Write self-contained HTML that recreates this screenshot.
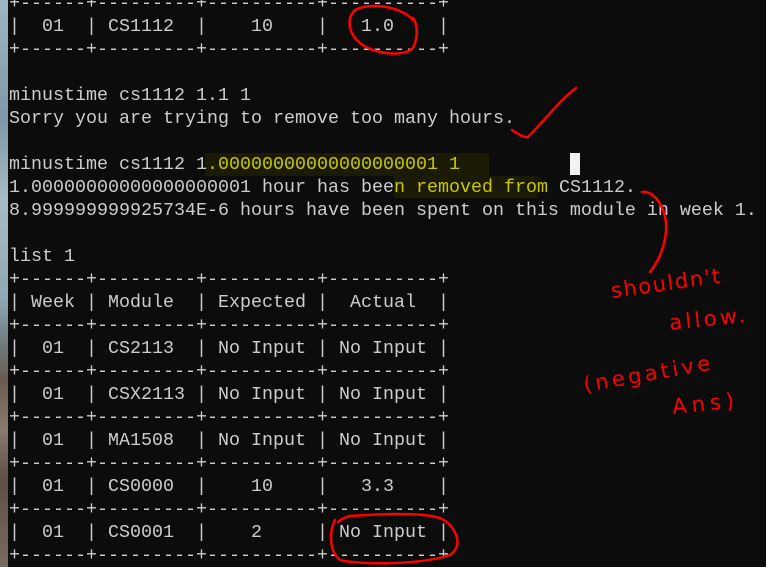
<!DOCTYPE html>
<html><head><meta charset="utf-8"><style>
html,body{margin:0;padding:0;width:766px;height:567px;overflow:hidden;background:#0c0c0c}
.strip{position:absolute;left:0;top:0;width:8px;height:567px;background:linear-gradient(#9fb6c4 0,#7d98a8 120px,#a9bcc6 200px,#8fa7b3 300px,#6f7a7c 345px,#6b5a50 380px,#8a7a70 430px,#5e4e46 480px,#7a6a60 567px)}
.term{position:absolute;left:9px;top:-8.5px;font-family:"Liberation Mono",monospace;font-size:18.33px;line-height:23px;color:#cccccc;white-space:pre}
.y{color:#c8c800}
.hl1{position:absolute;left:205px;top:153px;width:284px;height:23px;background:#1b1b05}
.hl2{position:absolute;left:394px;top:176px;width:144px;height:22px;background:#1b1b05}
.cur{position:absolute;left:570px;top:153px;width:10px;height:22px;background:#f2f2f2}
svg{position:absolute;left:0;top:0}
</style></head><body>
<div class="strip"></div>
<div class="hl1"></div><div class="hl2"></div><div class="cur"></div>
<div class="term">+------+---------+----------+----------+
|  01  | CS1112  |    10    |   1.0    |
+------+---------+----------+----------+

minustime cs1112 1.1 1
Sorry you are trying to remove too many hours.

minustime cs1112 1<span class="y">.00000000000000000001 1</span>
1.00000000000000000001 hour has bee<span class="y">n removed from</span> CS1112.
8.999999999925734E-6 hours have been spent on this module in week 1.

list 1
+------+---------+----------+----------+
| Week | Module  | Expected |  Actual  |
+------+---------+----------+----------+
|  01  | CS2113  | No Input | No Input |
+------+---------+----------+----------+
|  01  | CSX2113 | No Input | No Input |
+------+---------+----------+----------+
|  01  | MA1508  | No Input | No Input |
+------+---------+----------+----------+
|  01  | CS0000  |    10    |   3.3    |
+------+---------+----------+----------+
|  01  | CS0001  |    2     | No Input |
+------+---------+----------+----------+</div>
<svg width="766" height="567" viewBox="0 0 766 567" fill="none" stroke="#ff0000" stroke-width="2.5" stroke-linecap="round" stroke-linejoin="round">
<path d="M413,20 C400,6 370,2 355,10 C345,20 350,35 360,43 C375,55 405,57 413,48 C418,38 418,25 413,18"/>
<path d="M512,130 C518,134 524,138 528,137 C545,120 560,100 576,88"/>
<path d="M642,192 C655,190 668,210 666,232 C664,250 658,262 650,272"/>
<path d="M335,520 C330,530 328,550 340,560 C360,565 420,565 450,555 C465,545 455,525 440,518 C420,512 380,514 350,516 C343,518 340,520 338,522"/>
<g fill="#ff0000" stroke="none" font-family="'DejaVu Sans',sans-serif" font-size="21">
<text x="612" y="298" transform="rotate(-8 612 298)" textLength="110">shouldn't</text>
<text x="670" y="330" transform="rotate(-6 670 330)" textLength="76">allow.</text>
<text x="585" y="392" transform="rotate(-10 585 392)" textLength="128">(negative</text>
<text x="673" y="414" transform="rotate(-6 673 414)" textLength="62">Ans)</text>
</g>
</svg>
</body></html>
